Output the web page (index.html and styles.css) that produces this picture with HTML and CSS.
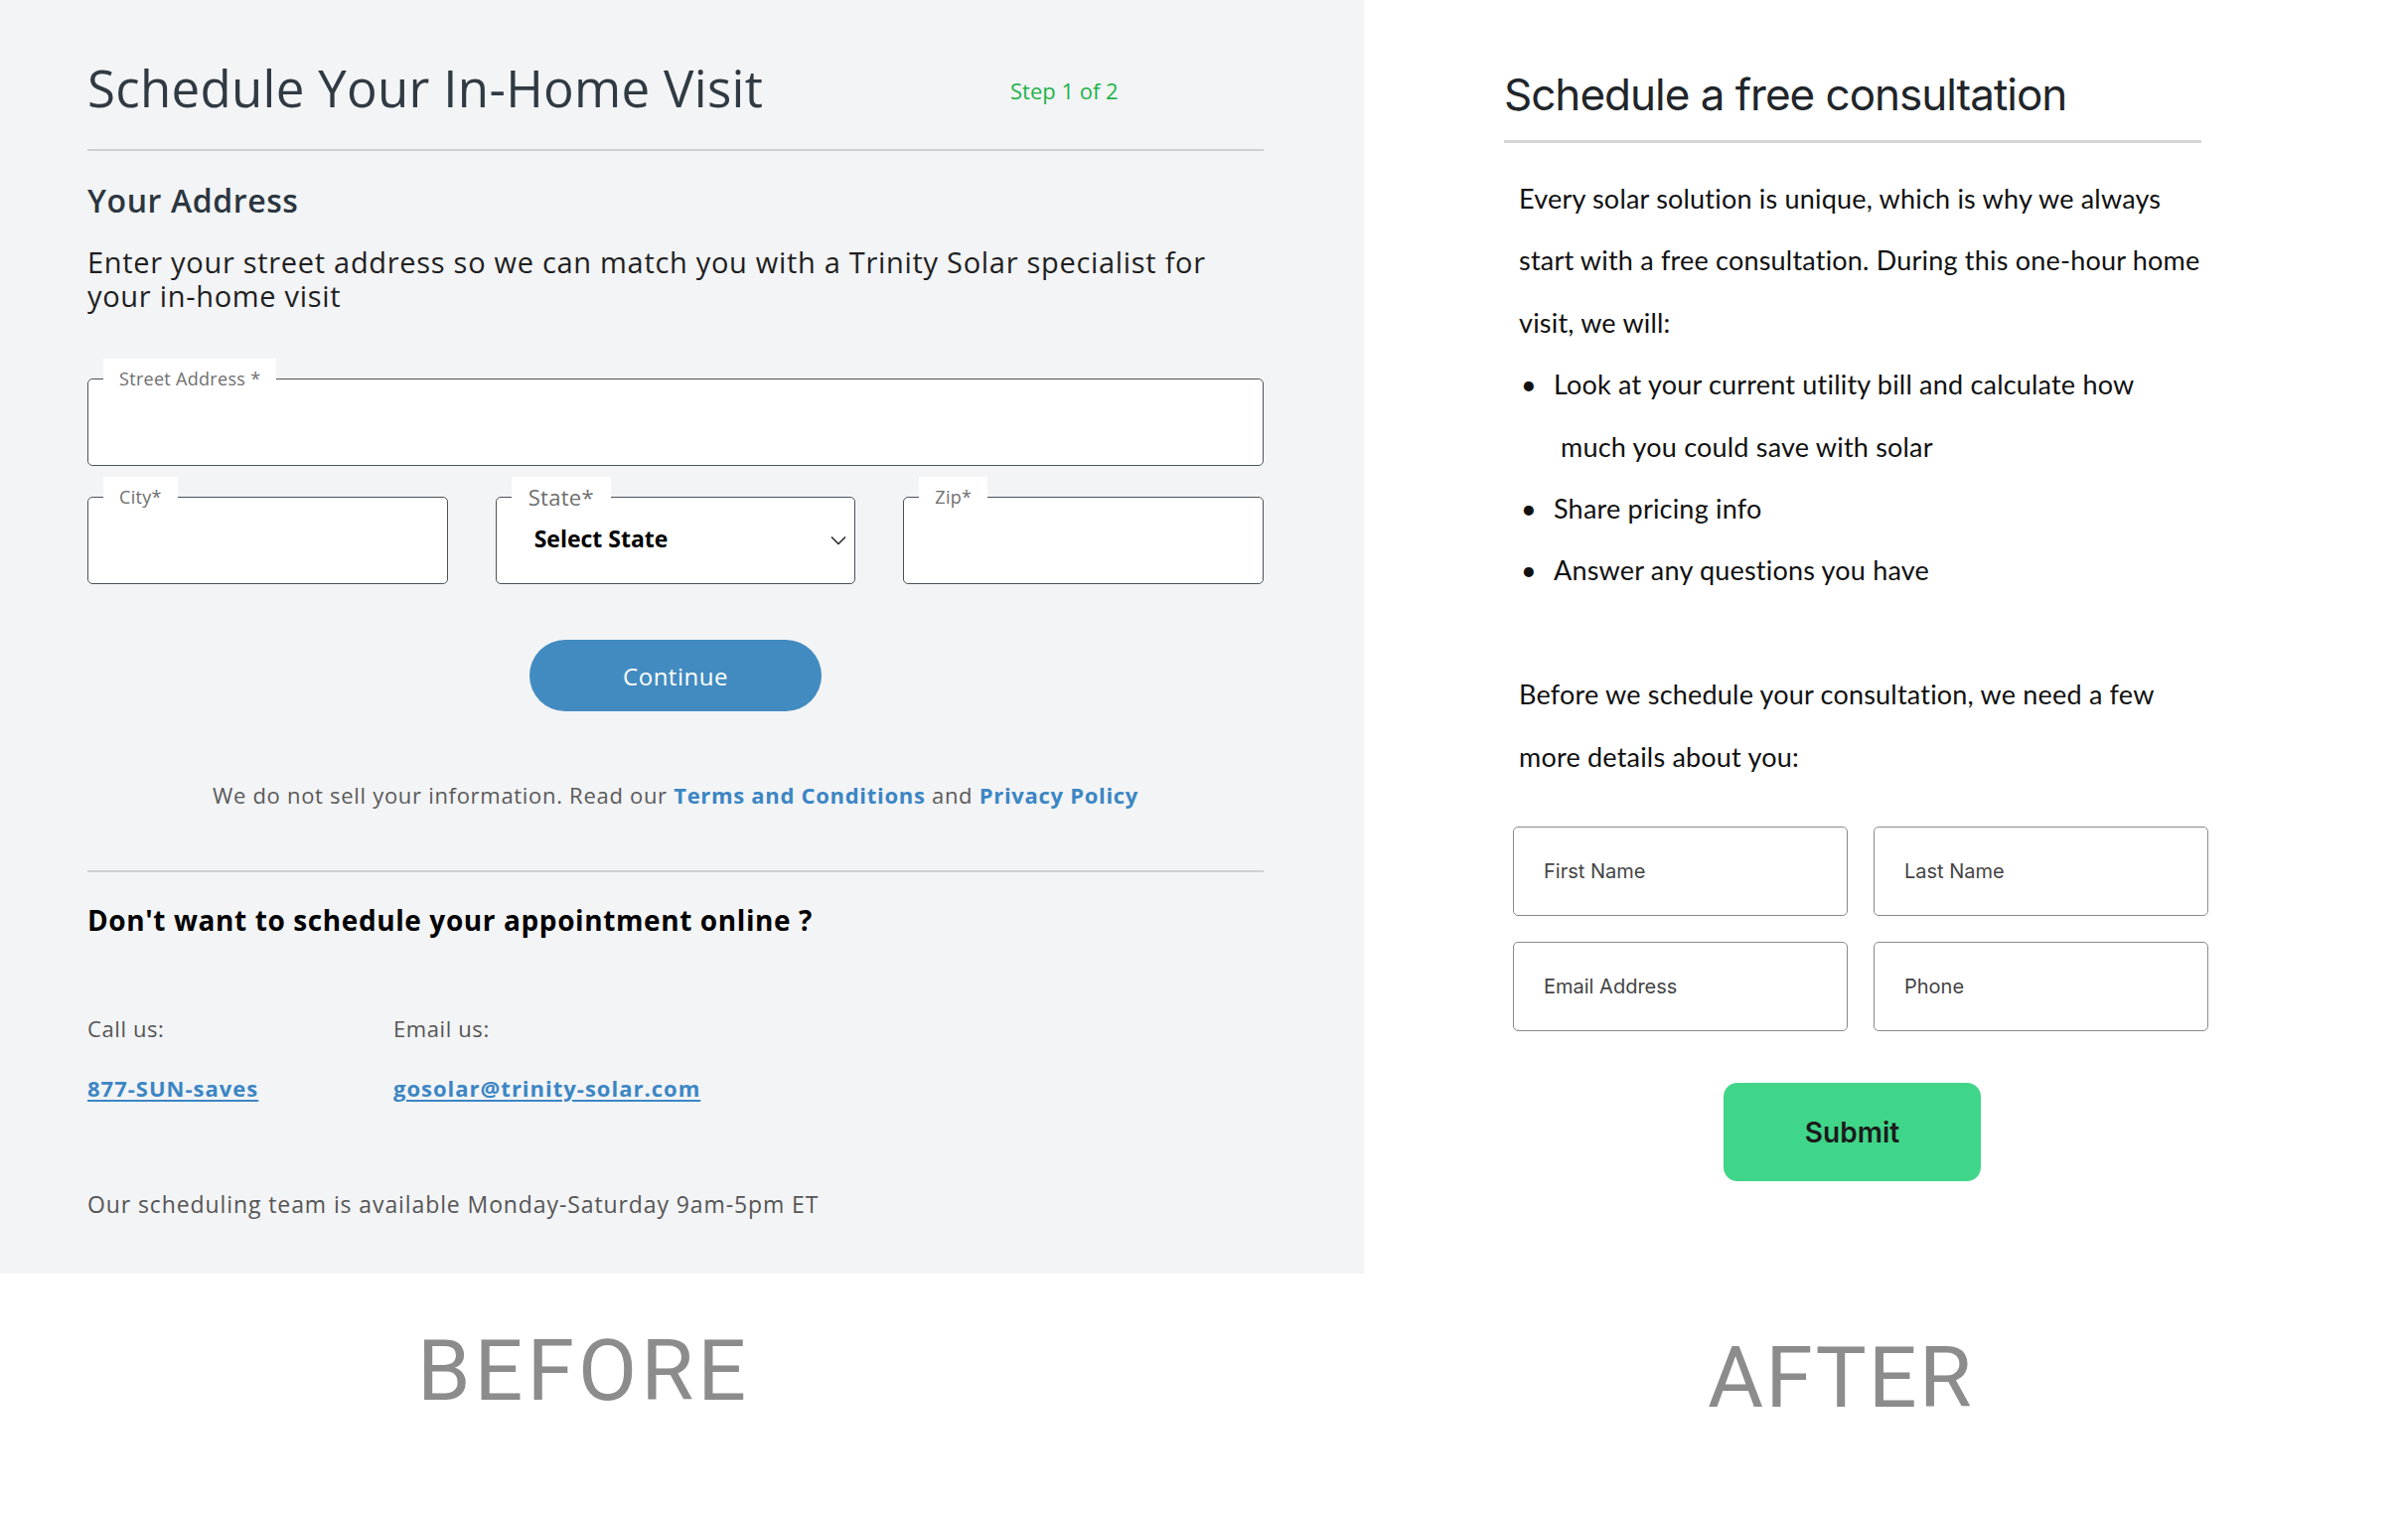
FILE: index.html
```html
<!DOCTYPE html>
<html lang="en">
<head>
  <meta charset="UTF-8">
  <title>Before / After - Schedule a consultation</title>
  <link rel="stylesheet" href="styles.css">
</head>
<body>

  <div class="compare">

    <section class="before">
      <div class="title-row">
        <h1>Schedule Your In-Home Visit</h1>
        <span class="step">Step 1 of 2</span>
      </div>
      <hr class="rule">

      <h2>Your Address</h2>
      <p class="lead">Enter your street address so we can match you with a Trinity Solar specialist for<br>your in-home visit</p>

      <fieldset class="field">
        <legend>Street Address *</legend>
        <input type="text">
      </fieldset>

      <div class="field-row">
        <fieldset class="field">
          <legend>City*</legend>
          <input type="text">
        </fieldset>
        <fieldset class="field">
          <legend class="big">State*</legend>
          <div class="select">
            <span>Select State</span>
            <svg width="16" height="10" viewBox="0 0 16 10"><path d="M1 1.5 L8 8.5 L15 1.5" fill="none" stroke="#222" stroke-width="1.5"/></svg>
          </div>
        </fieldset>
        <fieldset class="field">
          <legend>Zip*</legend>
          <input type="text">
        </fieldset>
      </div>

      <div class="center">
        <button class="continue-btn">Continue</button>
      </div>

      <p class="privacy">We do not sell your information. Read our <a href="#">Terms and Conditions</a> and <a href="#">Privacy Policy</a></p>

      <hr class="rule rule-low">

      <h3>Don't want to schedule your appointment online ?</h3>

      <div class="contact">
        <div class="contact-col">
          <div class="contact-label">Call us:</div>
          <a href="#">877-SUN-saves</a>
        </div>
        <div class="contact-col">
          <div class="contact-label">Email us:</div>
          <a href="#">gosolar@trinity-solar.com</a>
        </div>
      </div>

      <p class="hours">Our scheduling team is available Monday-Saturday 9am-5pm ET</p>
    </section>

    <section class="after">
      <h1>Schedule a free consultation</h1>
      <div class="after-rule"></div>

      <div class="copy">
        <p>Every solar solution is unique, which is why we always<br>start with a free consultation. During this one-hour home<br>visit, we will:</p>
        <ul>
          <li><span>Look at your current utility bill and calculate how<br>&nbsp;much you could save with solar</span></li>
          <li><span>Share pricing info</span></li>
          <li><span>Answer any questions you have</span></li>
        </ul>
        <p class="gap">Before we schedule your consultation, we need a few<br>more details about you:</p>
      </div>

      <form class="details">
        <input type="text" placeholder="First Name">
        <input type="text" placeholder="Last Name">
        <input type="text" placeholder="Email Address">
        <input type="text" placeholder="Phone">
        <button type="button" class="submit-btn">Submit</button>
      </form>
    </section>

  </div>

  <div class="captions">
    <div class="caption caption-before">BEFORE</div>
    <div class="caption caption-after">AFTER</div>
  </div>

</body>
</html>
```

FILE: styles.css
```css
body {
  margin: 0;
  background-color: #fff;
  font-family: "Open Sans", sans-serif;
}

.compare {
  display: flex;
}

/* ---------- before ---------- */

.before {
  width: 1373px;
  height: 1282px;
  box-sizing: border-box;
  padding: 58px 101px 0 88px;
  background-color: #f3f4f6;
}

.title-row {
  display: grid;
  grid-template-columns: 929px auto;
  align-items: center;
}

.before h1 {
  margin: 0;
  font-size: 51px;
  line-height: 60px;
  font-weight: 400;
  color: #303a43;
  letter-spacing: 0.3px;
}

.step {
  font-size: 22px;
  color: #1fb24a;
  padding-top: 6px;
}

.rule {
  margin: 32px 0 0;
  border: none;
  height: 2px;
  background-color: #cfd0d2;
}

.before h2 {
  margin: 30px 0 0;
  font-size: 32px;
  line-height: 40px;
  font-weight: 600;
  color: #2c3640;
  letter-spacing: 0.6px;
}

.lead {
  margin: 25px 0 0;
  font-size: 29px;
  line-height: 34px;
  color: #1f1f1f;
  letter-spacing: 0.7px;
}

.field {
  margin: 46px 0 0;
  padding: 0;
  min-width: 0;
  border: 1px solid #4b5258;
  border-radius: 5px;
  background-color: #fff;
}

.field legend {
  margin-left: 15px;
  padding: 0 16px;
  background-color: #fff;
  font-size: 18px;
  line-height: 40px;
  color: #6f6f6f;
  letter-spacing: 0.3px;
}

.field legend.big {
  padding: 0 17px;
  font-size: 22px;
}

.field input {
  display: block;
  width: 100%;
  height: 67px;
  box-sizing: border-box;
  border: none;
  background: transparent;
  padding: 0 20px;
  font-family: "Open Sans", sans-serif;
  font-size: 20px;
}

.field-row {
  display: grid;
  grid-template-columns: 1fr 1fr 1fr;
  gap: 48px;
  margin-top: 11px;
}

.field-row .field {
  margin-top: 0;
}

.select {
  height: 67px;
  box-sizing: border-box;
  display: flex;
  justify-content: space-between;
  align-items: flex-start;
  padding: 8px 8px 0 38px;
  font-size: 23px;
  line-height: 28px;
  font-weight: 700;
  color: #000;
}

.select svg {
  margin-top: 11px;
}

.center {
  display: flex;
  justify-content: center;
  margin-top: 56px;
}

.continue-btn {
  width: 294px;
  height: 72px;
  border: none;
  border-radius: 36px;
  background-color: #428bc0;
  color: #fff;
  font-family: "Open Sans", sans-serif;
  font-size: 24px;
  letter-spacing: 0.5px;
}

.privacy {
  margin: 69px 0 0;
  text-align: center;
  font-size: 22px;
  line-height: 30px;
  color: #5a5a5a;
  letter-spacing: 0.7px;
}

.privacy a {
  color: #3b86c4;
  font-weight: 700;
  text-decoration: none;
}

.rule-low {
  margin-top: 61px;
}

.before h3 {
  margin: 30px 0 0;
  font-size: 28px;
  line-height: 36px;
  font-weight: 700;
  color: #000;
  letter-spacing: 0.6px;
}

.contact {
  display: flex;
  margin-top: 76px;
}

.contact-col {
  width: 308px;
  white-space: nowrap;
}

.contact-col + .contact-col {
  width: auto;
}

.contact-label {
  font-size: 22px;
  line-height: 30px;
  color: #555;
  letter-spacing: 0.6px;
}

.contact a {
  display: inline-block;
  margin-top: 30px;
  font-size: 22px;
  line-height: 30px;
  font-weight: 700;
  color: #3b86c4;
  text-decoration: underline;
  text-underline-offset: 3px;
  letter-spacing: 1px;
}

.hours {
  margin: 87px 0 0;
  font-size: 23px;
  line-height: 30px;
  color: #555;
  letter-spacing: 0.9px;
}

/* ---------- after ---------- */

.after {
  flex: 1;
  padding: 68px 0 0 141px;
}

.after h1 {
  width: 702px;
  margin: 0;
  font-family: Inter, sans-serif;
  font-size: 44px;
  line-height: 54px;
  font-weight: 400;
  color: #212529;
  letter-spacing: -1px;
}

.after-rule {
  width: 702px;
  height: 3px;
  margin-top: 19px;
  background-color: #d6d6d6;
}

.copy {
  margin: 25px 0 0 15px;
  font-family: Lato, sans-serif;
  font-size: 27px;
  line-height: 62.4px;
  color: #111;
  letter-spacing: 0.2px;
}

.copy p {
  margin: 0;
}

.copy ul {
  margin: 0;
  padding: 0;
  list-style: none;
}

.copy li {
  display: grid;
  grid-template-columns: 35px auto;
}

.copy li::before {
  content: "\2022";
  padding-left: 2px;
}

.copy .gap {
  margin-top: 62.4px;
}

.details {
  display: grid;
  grid-template-columns: 337px 337px;
  column-gap: 26px;
  row-gap: 26px;
  margin: 39px 0 0 9px;
}

.details input {
  height: 90px;
  box-sizing: border-box;
  border: 1px solid #8a8a8a;
  border-radius: 5px;
  padding: 0 30px;
  font-family: Inter, sans-serif;
  font-size: 20px;
  color: #333;
}

.details input::placeholder {
  color: #444;
}

.submit-btn {
  grid-column: 1 / 3;
  width: 259px;
  height: 99px;
  margin: 26px 0 0 212px;
  border: none;
  border-radius: 14px;
  background-color: #40d68a;
  color: #1b1b1b;
  font-family: Inter, sans-serif;
  font-size: 28px;
  font-weight: 600;
}

/* ---------- captions ---------- */

.captions {
  display: flex;
  align-items: flex-start;
}

.caption {
  font-family: Roboto, sans-serif;
  font-size: 86px;
  line-height: normal;
  color: #8c8c8c;
  letter-spacing: 4px;
}

.caption-before {
  margin: 47px 0 0 420px;
}

.caption-after {
  margin: 54px 0 0 964px;
  letter-spacing: 2px;
}
```
